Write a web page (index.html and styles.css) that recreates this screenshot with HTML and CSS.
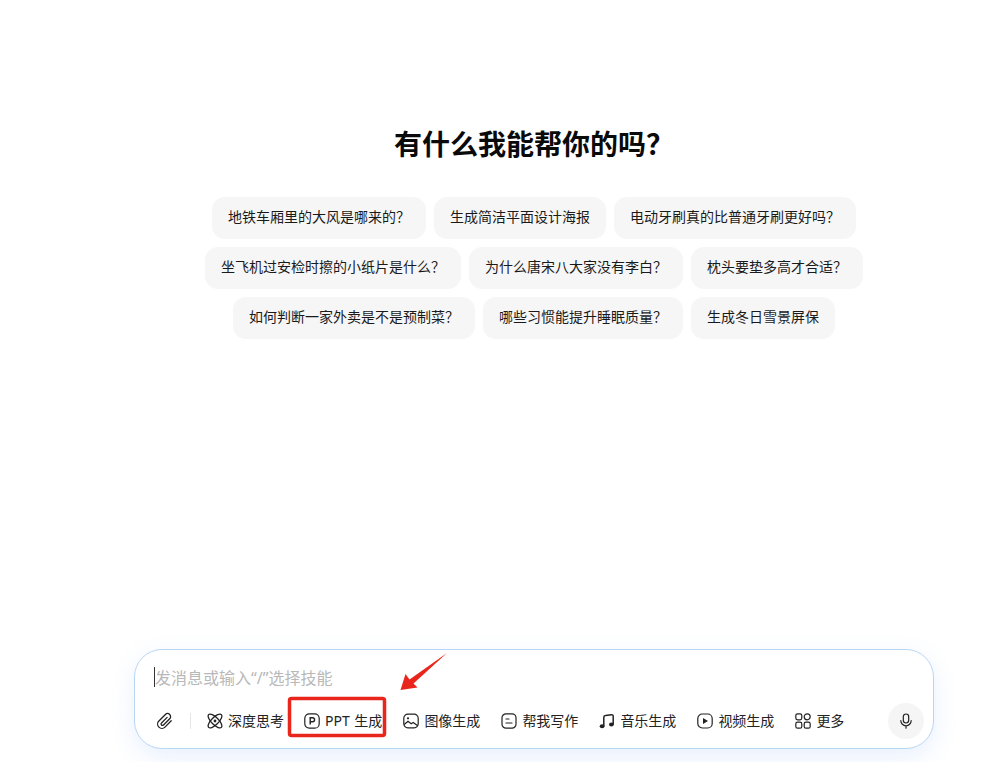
FILE: index.html
```html
<!DOCTYPE html>
<html lang="zh-CN">
<head>
<meta charset="utf-8">
<title>有什么我能帮你的吗</title>
<link rel="stylesheet" href="styles.css">
</head>
<body>
<main class="page">
  <section class="hero">
    <h1 class="title">有什么我能帮你的吗&#xFF1F;</h1>
    <div class="chips">
      <div class="chip-row">
        <span class="chip">地铁车厢里的大风是哪来的&#xFF1F;</span>
        <span class="chip">生成简洁平面设计海报</span>
        <span class="chip">电动牙刷真的比普通牙刷更好吗&#xFF1F;</span>
      </div>
      <div class="chip-row">
        <span class="chip">坐飞机过安检时擦的小纸片是什么&#xFF1F;</span>
        <span class="chip">为什么唐宋八大家没有李白&#xFF1F;</span>
        <span class="chip">枕头要垫多高才合适&#xFF1F;</span>
      </div>
      <div class="chip-row">
        <span class="chip">如何判断一家外卖是不是预制菜&#xFF1F;</span>
        <span class="chip">哪些习惯能提升睡眠质量&#xFF1F;</span>
        <span class="chip">生成冬日雪景屏保</span>
      </div>
    </div>
  </section>

  <section class="composer">
    <div class="input-line"><span class="caret"></span><span class="placeholder">发消息或输入“/”选择技能</span></div>
    <div class="toolbar">
      <svg class="clip" viewBox="0 0 20 20" fill="none" stroke="#222" stroke-width="1.3" stroke-linecap="round" stroke-linejoin="round"><path d="M17.200 9.800l-6.200 6.300a4.300 4.300 0 0 1-6.100-6.100l6.500-6.500a3 3 0 0 1 4.300 4.300l-6.200 6.200a1.400 1.400 0 0 1-2-2l5.600-5.600"/></svg>
      <span class="divider"></span>
      <div class="tools">
        <span class="tool tool-first"><svg class="icon" viewBox="0 0 16 16" fill="none" stroke="#222" stroke-width="1.3"><ellipse cx="8" cy="8" rx="3.600" ry="9" transform="rotate(45 8 8)"/><ellipse cx="8" cy="8" rx="3.600" ry="9" transform="rotate(-45 8 8)"/><circle cx="8" cy="8" r="1.400" fill="#222" stroke="none"/></svg>深度思考</span>
        <span class="tool"><svg class="icon" viewBox="0 0 16 16" fill="none" stroke="#222" stroke-width="1.2"><rect x="0.800" y="0.800" width="14.400" height="14.400" rx="4.500"/><path d="M6.200 11.500V4.700h2.300a2 2 0 0 1 0 4.100H6.200" stroke-width="1.400"/></svg>PPT 生成</span>
        <span class="tool"><svg class="icon" viewBox="0 0 16 16" fill="none" stroke="#222" stroke-width="1.2"><rect x="0.800" y="1.200" width="14.400" height="13.600" rx="4"/><path d="M1.200 11.500l3.800-3.300 3.200 2.600 2-1.400 4.600 3.400"/><circle cx="5" cy="5.300" r="1.100" fill="#222" stroke="none"/></svg>图像生成</span>
        <span class="tool"><svg class="icon" viewBox="0 0 16 16" fill="none" stroke="#222" stroke-width="1.2"><rect x="1" y="0.800" width="14" height="14.400" rx="4"/><path d="M5 6h3M5 10h6" stroke-linecap="round"/></svg>帮我写作</span>
        <span class="tool"><svg class="icon" viewBox="0 0 16 16" fill="none" stroke="#222" stroke-width="1.500"><path d="M4.800 13.200V4.500Q4.800 2.800 6.500 2.600L12.400 1.700Q14.200 1.500 14.200 3.200V11.400"/><ellipse cx="3.100" cy="13.300" rx="2.400" ry="2" fill="#222" stroke="none"/><ellipse cx="12.400" cy="11.600" rx="2.400" ry="2" fill="#222" stroke="none"/></svg>音乐生成</span>
        <span class="tool"><svg class="icon" viewBox="0 0 16 16" fill="none" stroke="#222" stroke-width="1.2"><rect x="0.800" y="1" width="14.400" height="14" rx="4.500"/><path d="M6 5v6l5-3z" fill="#222" stroke="none"/></svg>视频生成</span>
        <span class="tool"><svg class="icon" viewBox="0 0 16 16" fill="none" stroke="#222" stroke-width="1.2"><rect x="0.800" y="0.800" width="6" height="6" rx="1.800"/><rect x="9.200" y="0.800" width="6" height="6" rx="3"/><rect x="0.800" y="9.200" width="6" height="6" rx="1.800"/><rect x="9.200" y="9.200" width="6" height="6" rx="1.800"/></svg>更多</span>
      </div>
      <span class="mic"><svg viewBox="0 0 16 16" width="16" height="16" fill="none" stroke="#222" stroke-width="1.2" stroke-linecap="round"><rect x="5.300" y="1" width="5.400" height="9" rx="2.700"/><path d="M2.800 7.600a5.200 5.200 0 0 0 10.400 0M8 12.800v2.400"/></svg></span>
    </div>
  </section>

  <svg class="annotation" viewBox="0 0 991 762" aria-hidden="true">
    <rect x="289.500" y="698.500" width="95" height="37" rx="2" fill="none" stroke="#e8261c" stroke-width="3.500"/>
    <path d="M447 653L409.500 679.500 405.500 674 400.500 690 417.500 687.500 413.500 683.500z" fill="#e8261c"/>
  </svg>
</main>
</body>
</html>
```
FILE: styles.css
```css
* { box-sizing: border-box; }
html, body { margin: 0; padding: 0; background: #fff; }
body {
  font-family: "Noto Sans", "Noto Sans CJK SC", sans-serif;
  color: #1a1a1a;
  overflow: hidden;
}
.page {
  position: relative;
  width: 991px;
  height: 762px;
  display: flex;
  flex-direction: column;
  padding: 0 57px 13px 134px;
}
.hero { flex: 1; display: flex; flex-direction: column; align-items: center; }
.title {
  margin: 123px 0 0;
  font-size: 28px;
  line-height: 42px;
  font-weight: 700;
  color: #0a0a0a;
}
.chips { margin-top: 32px; display: flex; flex-direction: column; gap: 8px; }
.chip-row { display: flex; justify-content: center; gap: 8px; }
.chip {
  height: 42px;
  padding: 0 16px 4px;
  display: flex;
  align-items: center;
  background: #f6f6f7;
  border-radius: 13px;
  font-size: 14px;
  white-space: nowrap;
}
.composer {
  height: 100px;
  border: 1px solid #b9d6f5;
  border-radius: 28px;
  background: #fff;
  box-shadow: 0 8px 24px rgba(90, 150, 240, 0.14);
  padding: 15px 9px 9px 19px;
  display: flex;
  flex-direction: column;
  justify-content: space-between;
}
.input-line { display: flex; align-items: center; height: 24px; }
.caret { width: 1px; height: 20px; background: #333; }
.placeholder { font-size: 16px; color: #b8b8b8; white-space: nowrap; }
.toolbar { display: flex; align-items: center; height: 36px; }
.clip { width: 20px; height: 20px; flex: none; }
.divider { width: 1px; height: 16px; background: #e6e6e6; margin-left: 16px; }
.tools { display: flex; align-items: center; gap: 21px; margin-left: 16px; flex: 1; }
.tool { display: flex; align-items: center; gap: 5px; font-size: 14px; line-height: 20px; color: #222; white-space: nowrap; word-spacing: 1px; }
.tool-first { margin-right: -1px; }
.icon { width: 16px; height: 16px; flex: none; }
.mic {
  width: 36px;
  height: 36px;
  border-radius: 50%;
  background: #f5f5f5;
  display: flex;
  align-items: center;
  justify-content: center;
  flex: none;
}
.annotation { position: absolute; left: 0; top: 0; width: 991px; height: 762px; pointer-events: none; }
```
